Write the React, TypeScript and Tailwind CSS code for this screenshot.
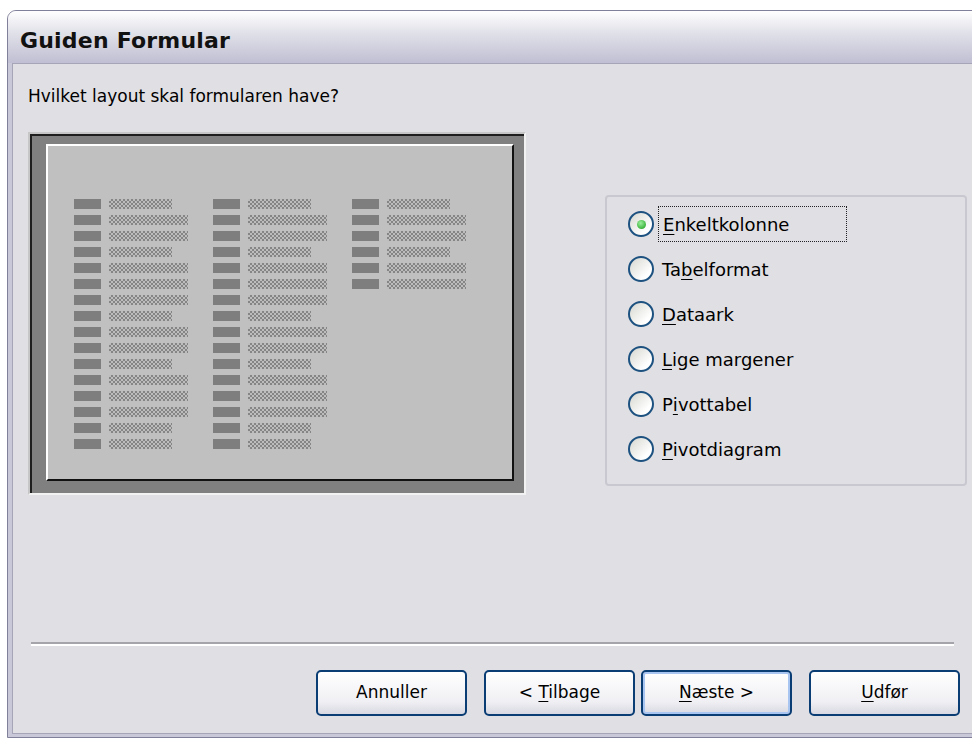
import React from "react";

const FONT = { fontFamily: '"DejaVu Sans", "Liberation Sans", sans-serif' };

// S = short field, L = long field
const colA = "SLLSLLLSLLSLLLSS".split("");
const colB = "SLLSLLLSLLSLLLSS".split("");
const colC = "SLLSLL".split("");

const options: { pre: string; key: string; post: string }[] = [
  { pre: "", key: "E", post: "nkeltkolonne" },
  { pre: "Ta", key: "b", post: "elformat" },
  { pre: "", key: "D", post: "ataark" },
  { pre: "", key: "L", post: "ige margener" },
  { pre: "P", key: "i", post: "vottabel" },
  { pre: "", key: "P", post: "ivotdiagram" },
];

const FieldColumn: React.FC<{ rows: string[] }> = ({ rows }) => (
  <div className="flex flex-col gap-[6px] w-[114px]">
    {rows.map((r, i) => (
      <div key={i} className="flex items-center gap-[8px] h-[10px]">
        <span className="block w-[27px] h-[10px] bg-[#7e7e7e]" />
        <span
          className={`block h-[10px] bg-[repeating-conic-gradient(#858585_0%_25%,#bdbdbd_0%_50%)] bg-[length:4px_4px] ${
            r === "L" ? "w-[79px]" : "w-[63px]"
          }`}
        />
      </div>
    ))}
  </div>
);

const Radio: React.FC<{ checked?: boolean }> = ({ checked }) => (
  <span className="flex items-center justify-center w-[26px] h-[26px] shrink-0 rounded-full border-2 border-[#1c5180] bg-[linear-gradient(135deg,#d6d6d0,#ffffff_75%)]">
    {checked && (
      <span className="block w-[9px] h-[9px] rounded-full bg-[radial-gradient(circle_at_40%_35%,#9cf09c,#169a16)]" />
    )}
  </span>
);

const Button: React.FC<{ children: React.ReactNode; primary?: boolean; className?: string }> = ({
  children,
  primary,
  className,
}) => (
  <button
    className={`h-[46px] w-[151px] rounded-[5px] border-2 border-[#0a3d73] bg-[linear-gradient(180deg,#ffffff,#f0f0f4_70%,#d8d8e2)] text-[17px] text-black ${
      primary ? "shadow-[inset_0_0_0_2px_#a8c4f0]" : ""
    } ${className ?? ""}`}
    style={FONT}
  >
    {children}
  </button>
);

export default function App() {
  return (
    <div className="w-[972px] h-[738px] bg-white overflow-hidden" style={FONT}>
      <div className="ml-[7px] mt-[10px] w-[980px] h-[728px] rounded-t-[9px] border border-[#80809a] bg-[#c8c8d8] flex flex-col">
        {/* title bar */}
        <div className="h-[52px] rounded-t-[8px] bg-[linear-gradient(180deg,#ffffff,#e2e2ea_40%,#c0bfd3)] flex items-center pl-[12px] pt-[6px]">
          <span className="text-[22px] font-bold text-[#111] tracking-[0.2px]">Guiden Formular</span>
        </div>

        {/* client area */}
        <div className="flex-1 mx-[4px] mb-[3px] border border-[#a6a5b8] bg-[#e0dfe3] flex flex-col pl-[15px]">
          <div className="mt-[20px] h-[24px] leading-[24px] text-[17px] text-black">
            Hvilket layout skal formularen have?
          </div>

          <div className="flex items-start mt-[24px]">
            {/* preview */}
            <div className="w-[498px] h-[363px] border-2 border-t-[#c6c6c6] border-l-[#c6c6c6] border-r-[#f2f2f2] border-b-[#f2f2f2] flex">
              <div className="flex-1 flex bg-[#808080] border-t-2 border-l-2 border-[#1e1e1e] pl-[14px] pt-[8px] pr-[10px] pb-[12px]">
                <div className="flex-1 bg-[#c0c0c0] border-t-2 border-l-2 border-t-white border-l-white border-r-2 border-b-2 border-r-[#111] border-b-[#111]">
                  <div className="flex gap-[25px] pl-[26px] pt-[53px]">
                    <FieldColumn rows={colA} />
                    <FieldColumn rows={colB} />
                    <FieldColumn rows={colC} />
                  </div>
                </div>
              </div>
            </div>

            {/* layout options */}
            <div className="ml-[79px] mt-[63px] w-[362px] h-[291px] rounded-[4px] border-2 border-[#c9c8d0] flex flex-col pl-[21px] pt-[14px] gap-[19px]">
              {options.map((o, i) => (
                <label key={i} className="flex items-center h-[26px] text-[18px] text-black">
                  <Radio checked={i === 0} />
                  <span
                    className={`ml-[4px] pl-[4px] h-[36px] flex items-center ${
                      i === 0 ? "w-[189px] border border-dotted border-[#222]" : ""
                    }`}
                  >
                    {o.pre}
                    <span className="underline underline-offset-[3px]">{o.key}</span>
                    {o.post}
                  </span>
                </label>
              ))}
            </div>
          </div>

          <div className="mt-auto ml-[3px] w-[923px] border-t-2 border-t-[#a5a4ab] border-b-2 border-b-white" />

          <div className="flex items-center mt-[24px] mb-[17px] pl-[288px]">
            <Button>Annuller</Button>
            <Button className="ml-[17px]">
              &lt; <span className="underline underline-offset-[3px]">T</span>ilbage
            </Button>
            <Button primary className="ml-[6px]">
              <span className="underline underline-offset-[3px]">N</span>æste &gt;
            </Button>
            <Button className="ml-[17px]">
              <span className="underline underline-offset-[3px]">U</span>dfør
            </Button>
          </div>
        </div>
      </div>
    </div>
  );
}
